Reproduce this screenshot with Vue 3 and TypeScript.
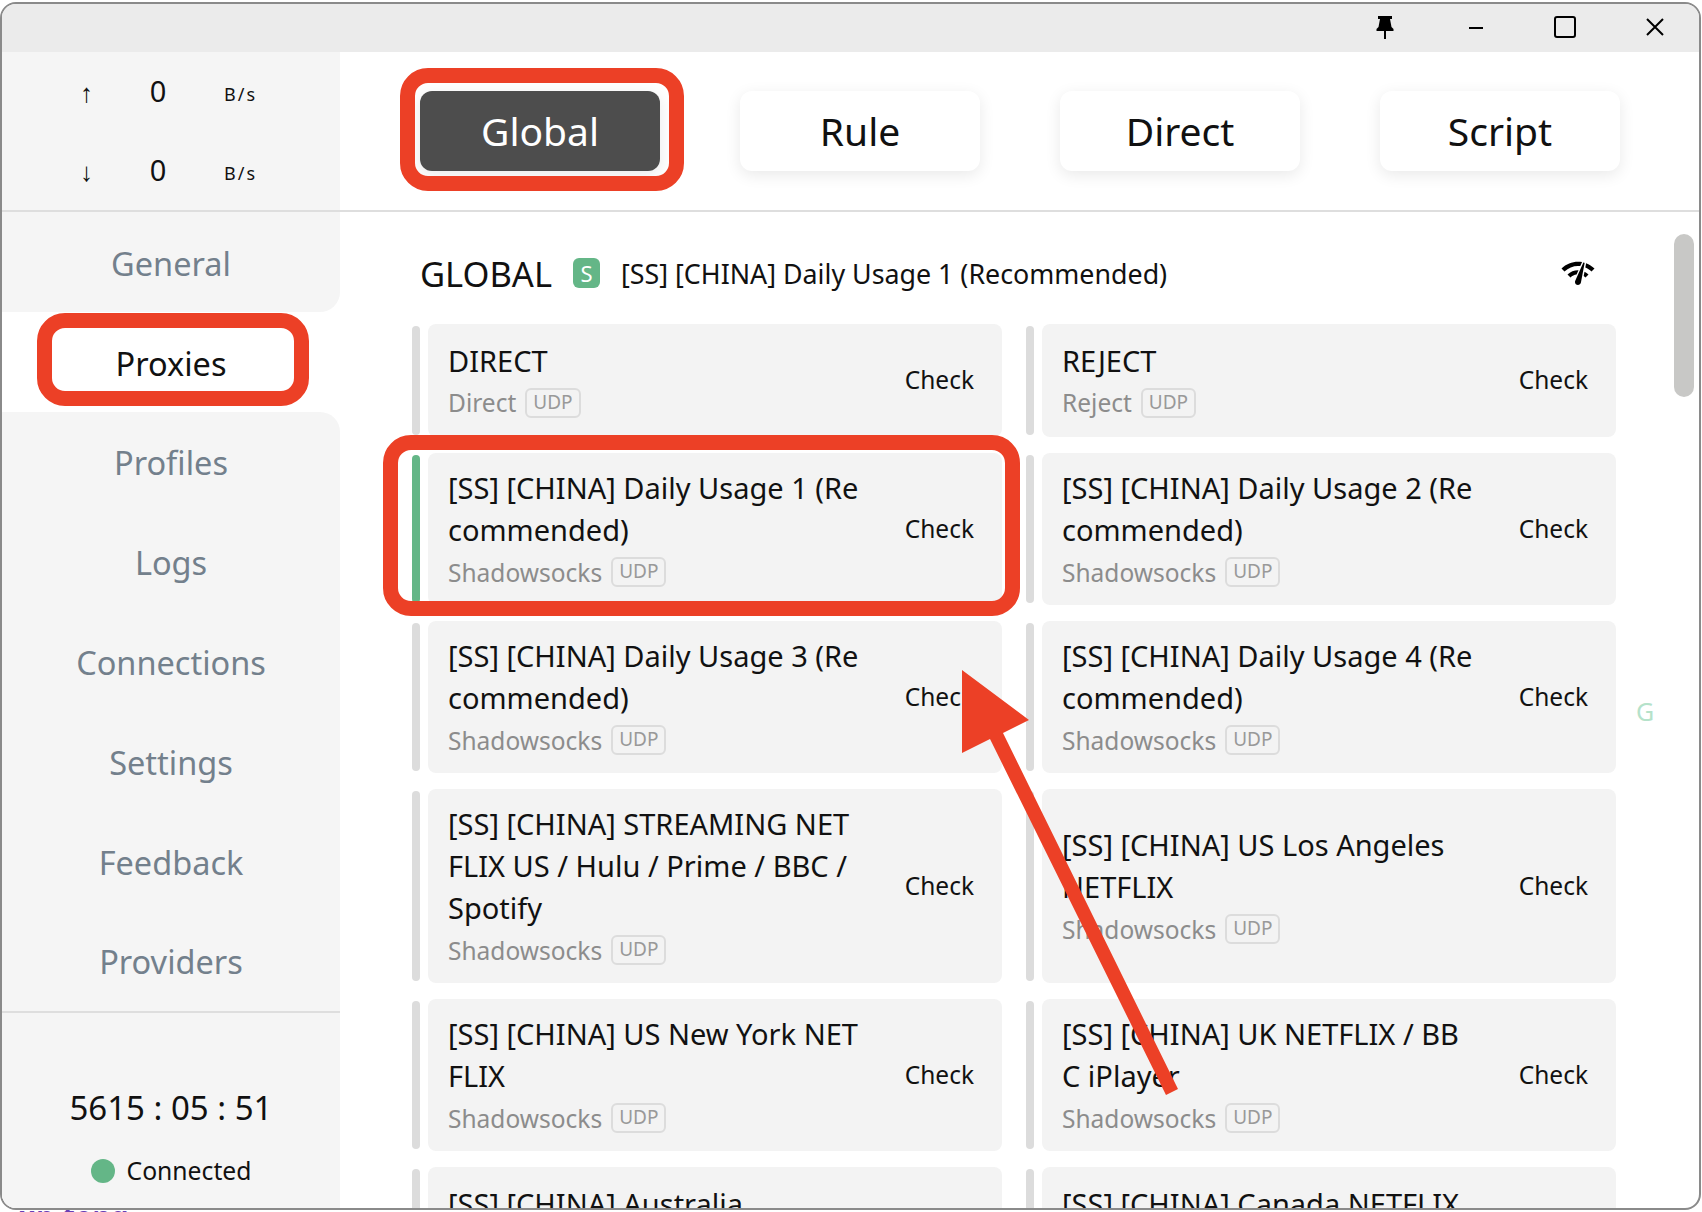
<template>
  <div class="page">
    <div class="stray"><b>up-tong.</b> <span>some text</span></div>

    <div class="window">
      <div class="titlebar">
        <svg class="tb-icon pin" viewBox="0 0 18 24" width="18" height="24"><path d="M2 1h14v3h-2l1.500 8 2 2v2H10v8H8v-8H.500v-2l2-2L4 4H2z" /></svg>
        <svg class="tb-icon minimize" viewBox="0 0 16 4" width="16" height="4"><path d="M1 2h14" /></svg>
        <svg class="tb-icon maximize" viewBox="0 0 22 22" width="22" height="22"><rect x="1" y="1" width="20" height="20" rx="2" /></svg>
        <svg class="tb-icon close" viewBox="0 0 18 18" width="18" height="18"><path d="M1 1l16 16M17 1L1 17" /></svg>
      </div>

      <div class="top-row">
        <div class="speed">
          <template v-for="row in speedRows" :key="row.arrow">
            <span class="speed-arrow">{{ row.arrow }}</span>
            <span class="speed-num">{{ row.value }}</span>
            <span class="speed-unit">B/s</span>
          </template>
        </div>
        <div class="modes">
          <button v-for="m in modes" :key="m" class="mode-btn" :class="{ active: m === 'Global' }">{{ m }}</button>
        </div>
      </div>

      <div class="main-row">
        <aside class="sidebar">
          <nav class="nav">
            <div
              v-for="(item, i) in navItems"
              :key="item"
              class="nav-item"
              :class="{ active: i === activeNav, before: i === activeNav - 1, after: i === activeNav + 1 }"
            >{{ item }}</div>
          </nav>
          <div class="status">
            <div class="uptime">5615 : 05 : 51</div>
            <div class="connected"><i class="dot"></i>Connected</div>
          </div>
        </aside>

        <section class="content">
          <div class="group-head">
            <span class="group-title">GLOBAL</span>
            <span class="group-badge">S</span>
            <span class="group-current">[SS] [CHINA] Daily Usage 1 (Recommended)</span>
            <svg class="net-check" viewBox="0 0 24 24" width="36" height="36"><path d="M15.900 5c-.17 0-.32.09-.41.23l-.07.15-5.180 11.650c-.16.29-.26.61-.26.96 0 1.110.9 2.010 2.010 2.010.96 0 1.770-.68 1.960-1.590l.01-.03L16.400 5.500c0-.28-.22-.5-.5-.5zM1 9l2 2c2.880-2.880 6.790-4.080 10.530-3.620l1.190-2.680C9.890 3.840 4.740 5.270 1 9zm20 2l2-2c-1.640-1.640-3.550-2.820-5.590-3.570l-.53 2.820c1.500.62 2.900 1.530 4.120 2.750zm-4 4l2-2c-.8-.8-1.700-1.420-2.660-1.890l-.55 2.920c.42.27.83.59 1.210.97zM5 13l2 2c1.130-1.130 2.560-1.790 4.030-2l1.280-2.880c-2.630-.08-5.300.87-7.310 2.880z" /></svg>
          </div>

          <div class="proxy-grid">
            <div v-for="p in proxies" :key="p.name" class="proxy-row">
              <div class="bar" :class="{ selected: p.selected }"></div>
              <div class="card">
                <div class="info">
                  <div class="name">{{ p.name }}</div>
                  <div class="meta">
                    <span class="type">{{ p.type }}</span>
                    <span class="udp">UDP</span>
                  </div>
                </div>
                <span class="check">Check</span>
              </div>
            </div>
          </div>

          <div class="thumb"></div>
          <span class="letter">G</span>
        </section>
      </div>
    </div>

    <!-- annotations drawn over the screenshot -->
    <div class="mark mark-global"></div>
    <div class="mark mark-proxies"></div>
    <div class="mark mark-item"></div>
    <svg class="arrow" viewBox="0 0 1702 1212" width="1702" height="1212">
      <polygon points="962,670 1029,720 1003,733 1178,1089 1166,1095 990,739 962,753" />
    </svg>
  </div>
</template>

<script setup lang="ts">
interface Proxy {
  name: string
  type: string
  selected?: boolean
}

const speedRows = [
  { arrow: '↑', value: 0 },
  { arrow: '↓', value: 0 }
]

const modes = ['Global', 'Rule', 'Direct', 'Script']

const navItems = ['General', 'Proxies', 'Profiles', 'Logs', 'Connections', 'Settings', 'Feedback', 'Providers']
const activeNav = 1

const ss = 'Shadowsocks'
const proxies: Proxy[] = [
  { name: 'DIRECT', type: 'Direct' },
  { name: 'REJECT', type: 'Reject' },
  { name: '[SS] [CHINA] Daily Usage 1 (Recommended)', type: ss, selected: true },
  { name: '[SS] [CHINA] Daily Usage 2 (Recommended)', type: ss },
  { name: '[SS] [CHINA] Daily Usage 3 (Recommended)', type: ss },
  { name: '[SS] [CHINA] Daily Usage 4 (Recommended)', type: ss },
  { name: '[SS] [CHINA] STREAMING NETFLIX US / Hulu / Prime / BBC / Spotify', type: ss },
  { name: '[SS] [CHINA] US Los Angeles\nNETFLIX', type: ss },
  { name: '[SS] [CHINA] US New York NETFLIX', type: ss },
  { name: '[SS] [CHINA] UK NETFLIX / BBC iPlayer', type: ss },
  { name: '[SS] [CHINA] Australia', type: ss },
  { name: '[SS] [CHINA] Canada NETFLIX', type: ss }
]
</script>

<style>
html, body {
  background: #fff;
}
</style>

<style scoped>
.page {
  position: relative;
  width: 1702px;
  height: 1212px;
  overflow: hidden;
  background: #fff;
  font-family: "Noto Sans", "Open Sans", sans-serif;
  color: #111;
}

.stray {
  position: absolute;
  left: 18px;
  top: 1198px;
  font-size: 28px;
  line-height: 36px;
  color: #6a3fb5;
}

.stray span {
  color: #999;
  font-size: 22px;
}

.window {
  position: relative;
  margin-top: 2px;
  width: 1701px;
  height: 1208px;
  box-sizing: border-box;
  border: 2px solid #8a8a8a;
  border-radius: 16px;
  background: #fff;
  overflow: hidden;
  display: flex;
  flex-direction: column;
}

.titlebar {
  height: 48px;
  flex-shrink: 0;
  background: #ebebeb;
  display: flex;
  align-items: center;
  position: relative;
}

.tb-icon {
  position: absolute;
  fill: none;
  stroke: #000;
  stroke-width: 2;
}

.pin {
  left: 1374px;
  top: 11px;
  fill: #000;
  stroke: none;
}

.minimize {
  left: 1466px;
  top: 22px;
}

.maximize {
  left: 1552px;
  top: 12px;
}

.close {
  left: 1644px;
  top: 14px;
}

.top-row {
  display: flex;
  height: 160px;
  flex-shrink: 0;
  box-sizing: border-box;
  border-bottom: 2px solid #dedede;
}

.speed {
  width: 338px;
  flex-shrink: 0;
  background: #f5f5f5;
  box-sizing: border-box;
  padding: 0 0 0 70px;
  display: grid;
  grid-template-columns: 28px 116px 1fr;
  grid-template-rows: 79px 79px;
  align-items: center;
  align-content: center;
}

.speed-arrow {
  font-size: 26px;
  text-align: center;
  font-family: "Liberation Sans", sans-serif;
  padding: 4px 0 0 1px;
}

.speed-num {
  font-size: 29px;
  text-align: center;
  padding-bottom: 2px;
}

.speed-unit {
  font-size: 18px;
  letter-spacing: 2px;
  padding-left: 8px;
  padding-top: 4px;
}

.modes {
  flex: 1;
  display: flex;
  align-items: center;
  gap: 80px;
  padding-left: 80px;
}

.mode-btn {
  width: 240px;
  height: 80px;
  border: none;
  border-radius: 12px;
  background: #fff;
  box-shadow: 0 4px 16px rgba(0, 0, 0, .09);
  font-family: inherit;
  font-size: 39px;
  color: #111;
  padding: 0 0 2px;
}

.mode-btn.active {
  background: #4d4d4d;
  color: #fff;
}

.main-row {
  flex: 1;
  display: flex;
  min-height: 0;
}

.sidebar {
  width: 338px;
  flex-shrink: 0;
  display: flex;
  flex-direction: column;
  background: #fff;
}

.nav-item {
  height: 99.800px;
  display: flex;
  align-items: center;
  justify-content: center;
  background: #f5f5f5;
  font-size: 32.500px;
  color: #73808c;
  padding-top: 3px;
  box-sizing: border-box;
}

.nav-item:last-child {
  height: 100.600px;
  padding-bottom: 1px;
}

.nav-item.active {
  background: #fff;
  color: #111;
}

.nav-item.before {
  border-bottom-right-radius: 20px;
}

.nav-item.after {
  border-top-right-radius: 20px;
}

.status {
  flex: 1;
  background: #f5f5f5;
  border-top: 2px solid #dedede;
  display: flex;
  flex-direction: column;
  align-items: center;
  padding-top: 70px;
}

.uptime {
  font-size: 33px;
  line-height: 50px;
  color: #111;
}

.connected {
  display: flex;
  align-items: center;
  gap: 12px;
  margin-top: 20px;
  font-size: 24.700px;
  line-height: 36px;
}

.dot {
  width: 24px;
  height: 24px;
  border-radius: 50%;
  background: #64b687;
}

.content {
  flex: 1;
  position: relative;
  overflow: hidden;
  padding-left: 72px;
}

.group-head {
  height: 112px;
  display: flex;
  align-items: center;
  position: relative;
  padding: 10px 0 0 8px;
  box-sizing: border-box;
}

.group-title {
  font-size: 34.500px;
}

.group-badge {
  margin-left: 21px;
  width: 27px;
  height: 30px;
  border-radius: 6px;
  background: #64b687;
  color: #fff;
  font-size: 22px;
  display: flex;
  align-items: center;
  justify-content: center;
}

.group-current {
  margin-left: 21px;
  font-size: 26.800px;
}

.net-check {
  position: absolute;
  left: 1148px;
  top: 43px;
}

.proxy-grid {
  display: grid;
  grid-template-columns: 590px 590px;
  column-gap: 24px;
  row-gap: 16px;
}

.proxy-row {
  display: flex;
  gap: 8px;
}

.bar {
  width: 8px;
  margin: 2px 0;
  border-radius: 4px;
  background: #dcdcdc;
  flex-shrink: 0;
}

.bar.selected {
  background: #64b687;
}

.card {
  flex: 1;
  display: flex;
  align-items: center;
  box-sizing: border-box;
  min-height: 113px;
  background: #f3f3f3;
  border-radius: 8px;
  padding: 14px 28px 12px 20px;
}

.info {
  width: 414px;
  flex-shrink: 0;
}

.name {
  font-size: 29px;
  line-height: 42px;
  word-break: break-all;
  white-space: pre-line;
}

.meta {
  display: flex;
  align-items: center;
  gap: 9px;
  height: 42px;
}

.type {
  font-size: 24.500px;
  color: #8c8c8c;
}

.udp {
  box-sizing: border-box;
  height: 30px;
  padding: 0 6px;
  border: 2px solid #dcdcdc;
  border-radius: 6px;
  font-size: 19px;
  line-height: 25px;
  color: #999;
}

.check {
  margin-left: auto;
  padding-bottom: 4px;
  font-size: 24.500px;
  color: #111;
}

.thumb {
  position: absolute;
  left: 1334px;
  top: 22px;
  width: 20px;
  height: 163px;
  border-radius: 10px;
  background: #c8c8c6;
}

.letter {
  position: absolute;
  left: 1296px;
  top: 481px;
  font-size: 25px;
  line-height: 36px;
  color: #b5e2ca;
}

.mark {
  position: absolute;
  box-sizing: border-box;
  border: 15px solid #ec4026;
  border-radius: 28px;
}

.mark-global {
  left: 400px;
  top: 68px;
  width: 284px;
  height: 123px;
}

.mark-proxies {
  left: 37px;
  top: 313px;
  width: 272px;
  height: 93px;
}

.mark-item {
  left: 383px;
  top: 435px;
  width: 637px;
  height: 181px;
}

.arrow {
  position: absolute;
  left: 0;
  top: 0;
  fill: #ec4026;
}
</style>
